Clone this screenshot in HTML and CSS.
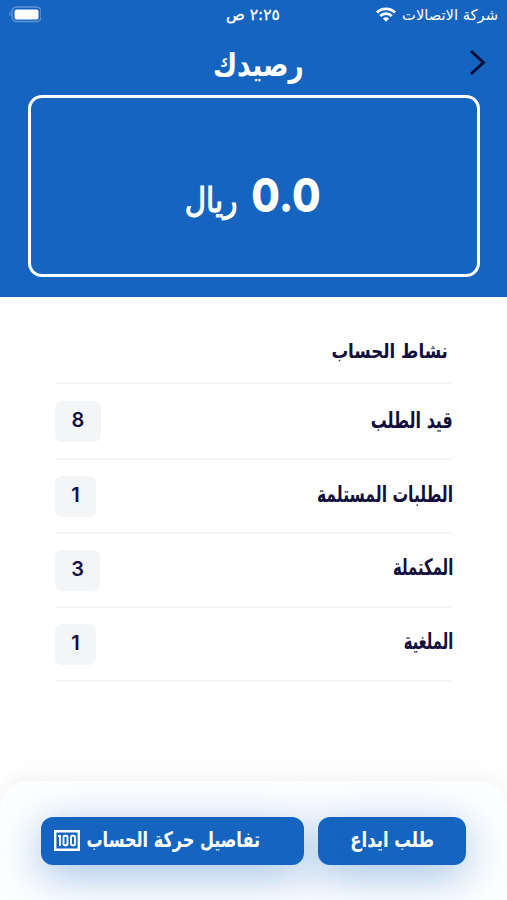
FILE: index.html
```html
<!DOCTYPE html>
<html lang="ar" dir="rtl">
<head>
<meta charset="utf-8">
<title>رصيدك</title>
<link rel="stylesheet" href="styles.css">
</head>
<body>
<div class="screen">
  <header class="hero">
    <div class="status">
      <div class="carrier"><span>شركة الاتصالات</span>
        <svg class="wifi" viewBox="0 0 20 15"><path d="M10 14.800 6.900 11.600a4.500 4.500 0 0 1 6.200 0z" fill="#fff"/><path d="M4.200 9a8.200 8.200 0 0 1 11.600 0M1 5.500a12.800 12.800 0 0 1 18 0" fill="none" stroke="#fff" stroke-width="2.800"/></svg>
      </div>
      <time class="clock">٢:٢٥ ص</time>
      <svg class="battery" viewBox="0 0 33 18"><rect x="4" y="1" width="29" height="14.500" rx="4.500" fill="none" stroke="#5f94d5" stroke-width="1.500"/><rect x="6.500" y="3.500" width="24" height="10" rx="2" fill="#fff"/><path d="M2.500 5.500Q-.5 8 2.500 10.500z" fill="#5f94d5"/></svg>
    </div>
    <div class="titlebar">
      <h1>رصيدك</h1>
      <svg class="chevron" viewBox="0 0 18 28"><path d="M2 2 14.500 13.500 2 25" fill="none" stroke="#080e3c" stroke-width="3"/></svg>
    </div>
    <section class="balance"><b>0.0</b><span>ريال</span></section>
  </header>
  <main class="activity">
    <h2><span class="t-activity">نشاط الحساب</span></h2>
    <div class="row first"><span class="label t-pending">قيد الطلب</span><span class="count wide">8</span></div>
    <div class="row"><span class="label t-received">الطلبات المستلمة</span><span class="count">1</span></div>
    <div class="row"><span class="label t-done">المكتملة</span><span class="count mid">3</span></div>
    <div class="row"><span class="label t-cancelled">الملغية</span><span class="count">1</span></div>
  </main>
  <footer class="actions">
    <button class="deposit"><span>طلب ايداع</span></button>
    <button class="details"><span>تفاصيل حركة الحساب</span>
      <svg class="bill" viewBox="0 0 26 21"><path d="M1.200 1.200h23.600v18.600H1.200z" fill="none" stroke="#fff" stroke-width="2.400"/><path d="M4 6h2v10" fill="none" stroke="#fff" stroke-width="2"/><rect x="9.500" y="5.800" width="4" height="9.400" rx="1.300" fill="none" stroke="#fff" stroke-width="1.900"/><rect x="17" y="5.800" width="4" height="9.400" rx="1.300" fill="none" stroke="#fff" stroke-width="1.900"/></svg>
    </button>
  </footer>
</div>
</body>
</html>
```
FILE: styles.css
```css
* { box-sizing: border-box; }
body { margin: 0; background: #fff; font-family: "DejaVu Sans", sans-serif; color: #120f3d; }
.screen { width: 507px; height: 900px; display: flex; flex-direction: column; overflow: hidden; }
.hero { height: 297px; background: #1565c0; color: #fff; flex: none; }
.status { height: 30px; padding: 0 9px 0 8px; display: grid; grid-template-columns: 1fr auto 1fr; align-items: center; }
.carrier { display: flex; align-items: center; gap: 6px; font-size: 14.7px; white-space: nowrap; }
.carrier span { transform: translateY(-1px); }
.wifi { width: 20px; height: 15px; transform: translateY(-1px); }
.clock { font-size: 15.5px; -webkit-text-stroke: .3px; }
.battery { width: 33px; height: 18px; justify-self: end; }
.titlebar { height: 65px; display: grid; place-items: center; padding: 0 20px; }
.titlebar > * { grid-area: 1 / 1; }
.titlebar h1 { margin: 0; font-size: 28px; transform: translate(5px, 3px) scale(.94, 1.15); }
.chevron { width: 18px; height: 28px; justify-self: start; }
.balance { width: 452px; height: 182px; margin: 0 27px 0 28px; border: 3px solid #fff; border-radius: 14px; display: flex; align-items: baseline; justify-content: center; gap: 13px; padding-top: 69px; }
.balance b { font: 800 46px/56px Inter, sans-serif; transform: translateX(.5px) scaleX(.9); }
.balance span { font-size: 28px; -webkit-text-stroke: .9px; transform: translate(2px, -2px) scale(1.05, 1.2); }
.activity { padding: 37px 54px 0 55px; flex: none; }
.activity h2 { height: 50px; margin: 0; padding: 0 5px; border-bottom: 2px solid #f6f6f7; font-size: 17px; line-height: 34px; }
.activity h2 span, .label { display: inline-block; transform-origin: right center; }
.t-activity { transform: scale(.98, 1.2); }
.row { height: 74px; display: flex; align-items: center; justify-content: space-between; border-bottom: 2px solid #f6f6f7; }
.first { height: 76px; }
.label { font-size: 19px; font-weight: 700; }
.t-pending { transform: translateY(-1px) scale(.84, 1.2); }
.t-received { transform: translateY(-2px) scale(.82, 1.2); }
.t-done { transform: translateY(-3px) scale(.78, 1.2); }
.t-cancelled { transform: translateY(-3px) scale(.77, 1.2); }
.count { width: 41px; height: 41px; border-radius: 7px; background: #f3f5f7; font: 600 20px/38px Inter, sans-serif; text-align: center; }
.wide { width: 46px; }
.mid { width: 45px; }
.actions { margin-top: auto; height: 119px; padding: 36px 41px 0; display: flex; gap: 14px; border-radius: 28px 28px 0 0; background: #fdfeff; box-shadow: 0 -5px 22px #0000000d; flex: none; }
.actions button { height: 48px; border: 0; padding: 0; border-radius: 12px; background: #1565c0; color: #fff; font: 700 17px/44px "DejaVu Sans", sans-serif; display: flex; align-items: center; white-space: nowrap; box-shadow: 0 10px 44px #1565c066; }
.actions .deposit { width: 148px; justify-content: center; }
.deposit span { transform: translateY(-2px) scale(.97, 1.25); }
.actions .details { width: 263px; justify-content: space-between; padding: 0 44px 0 13px; position: relative; }
.details span { width: 174px; transform-origin: right center; transform: translateY(-2px) scale(.945, 1.25); }
.bill { width: 26px; height: 21px; flex: none; transform: translateY(-1px); }
.actions .deposit { position: relative; }
```
